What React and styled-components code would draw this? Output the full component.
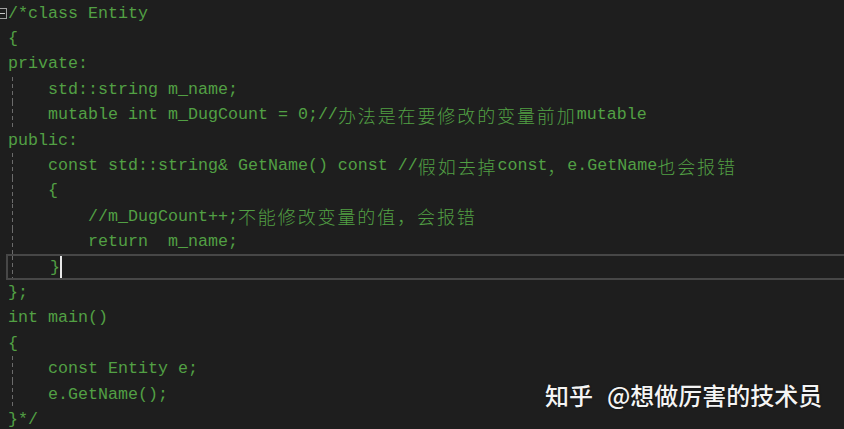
import React from 'react'
import styled, { createGlobalStyle } from 'styled-components'

const GlobalStyle = createGlobalStyle`
  html, body {
    margin: 0;
    padding: 0;
    background: #1e1e1e;
  }
`

const Screen = styled.div`
  position: relative;
  width: 844px;
  height: 429px;
  overflow: hidden;
  background: #1e1e1e;
`

const Code = styled.div`
  display: flex;
  flex-direction: column;
  padding-top: 0.5px;
  font-family: "Liberation Mono", "Noto Sans CJK SC", monospace;
  font-size: 16.67px;
  color: #52a044;
`

const Line = styled.div`
  position: relative;
  display: flex;
  align-items: center;
  height: 25.4px;
  padding-left: ${p => 8 + p.$indent * 40}px;
  white-space: pre;
  box-sizing: border-box;
  background-image: ${p => p.$guide
    ? 'repeating-linear-gradient(to bottom, #6b6b6b 0 4px, transparent 4px 7px)'
    : 'none'};
  background-repeat: no-repeat;
  background-position: 12px 0;
  background-size: 1px 100%;
  ${p => p.$current && `
    margin-left: 6px;
    padding-left: ${2 + p.$indent * 40}px;
    border: 2.5px solid #474747;
    border-right: none;
    background-position: 4px 0;
  `}
`

const Cjk = styled.span`
  font-family: "Noto Sans CJK SC", sans-serif;
  font-size: 18px;
  font-weight: 300;
  letter-spacing: 1.9px;
`

const Fold = styled.span`
  position: absolute;
  left: 0;
  top: 7px;
  width: 7px;
  height: 11px;
  border: 1px solid #a0a0a0;
  border-left: none;
  box-sizing: border-box;
  &::after {
    content: "";
    position: absolute;
    left: 0;
    top: 4px;
    width: 5px;
    height: 1px;
    background: #c8c8c8;
  }
`

const Caret = styled.span`
  display: inline-block;
  width: 2px;
  height: 22px;
  background: #e8e8e8;
`

const Watermark = styled.div`
  position: absolute;
  left: 545px;
  top: 377px;
  display: flex;
  gap: 14px;
  font-family: "Noto Sans CJK SC", sans-serif;
  font-size: 24px;
  font-weight: 500;
  color: #f4f4f4;
  white-space: pre;
  text-shadow: 0 0 2px rgba(0, 0, 0, 0.6);
`

const App = () => (
  <Screen>
    <GlobalStyle />
    <Code>
      <Line $indent={0}><Fold />/*class Entity</Line>
      <Line $indent={0}> {'{'}</Line>
      <Line $indent={0}>private:</Line>
      <Line $indent={1} $guide>std::string m_name;</Line>
      <Line $indent={1} $guide>mutable int m_DugCount = 0;//<Cjk>办法是在要修改的变量前加</Cjk>mutable</Line>
      <Line $indent={0}>public:</Line>
      <Line $indent={1} $guide>const std::string&amp; GetName() const //<Cjk>假如去掉</Cjk>const<Cjk>，</Cjk>e.GetName<Cjk>也会报错</Cjk></Line>
      <Line $indent={1} $guide>{'{'}</Line>
      <Line $indent={2} $guide>//m_DugCount++;<Cjk>不能修改变量的值，会报错</Cjk></Line>
      <Line $indent={2} $guide>return  m_name;</Line>
      <Line $indent={1} $guide $current>{'}'}<Caret /></Line>
      <Line $indent={0}>{'};'}</Line>
      <Line $indent={0}>int main()</Line>
      <Line $indent={0}> {'{'}</Line>
      <Line $indent={1} $guide>const Entity e;</Line>
      <Line $indent={1} $guide>e.GetName();</Line>
      <Line $indent={0}>{'}*/'}</Line>
    </Code>
    <Watermark>
      <span>知乎</span>
      <span>@想做厉害的技术员</span>
    </Watermark>
  </Screen>
)

export default App
